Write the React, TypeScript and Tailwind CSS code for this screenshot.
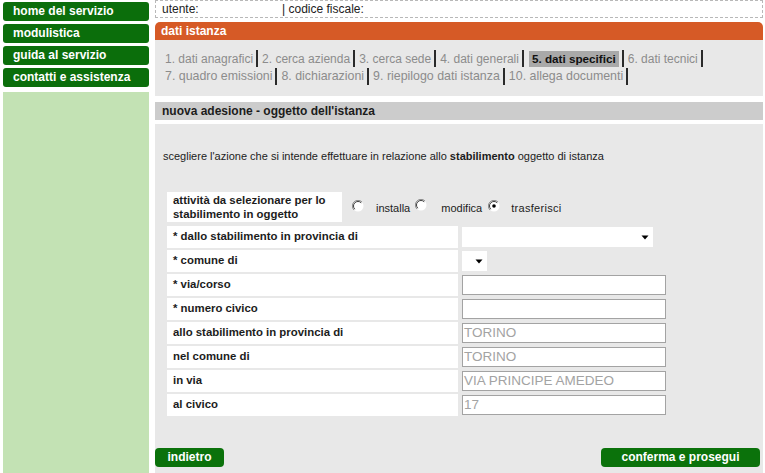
import React from "react";

const font = "font-['Liberation_Sans',Arial,sans-serif]";

function Radio({ checked }: { checked?: boolean }) {
  return (
    <svg width="12" height="12" viewBox="0 0 12 12" className="shrink-0">
      <circle cx="6" cy="6" r="5.5" fill="#ffffff" />
      <path d="M10 2 A5.6 5.6 0 0 0 2 10" stroke="#8a8a8a" strokeWidth="1" fill="none" />
      <path d="M9.2 2.8 A4.5 4.5 0 0 0 2.8 9.2" stroke="#3c3c3c" strokeWidth="1" fill="none" />
      {checked && <circle cx="6" cy="6" r="1.8" fill="#000" />}
    </svg>
  );
}

function Step({ label, active }: { label: string; active?: boolean }) {
  return (
    <span className="flex items-center h-[17px] border-r-2 border-[#2a2a2a] pr-[3px] mr-[4px]">
      {active ? (
        <span className="bg-[#a9a9a9] text-[#111] font-bold text-[11.7px] px-[3px] h-[16px] leading-[16px] ml-[1px]">{label}</span>
      ) : (
        <span className="text-[#8c8c8c]">{label}</span>
      )}
    </span>
  );
}

function Caret() {
  return (
    <svg width="8" height="5" viewBox="0 0 8 5">
      <path d="M0.5 0.5 L7.5 0.5 L4 4.5 Z" fill="#000" />
    </svg>
  );
}

function Row({ label, children }: { label: string; children?: React.ReactNode }) {
  return (
    <div className="flex items-center h-[22px]">
      <div className="w-[291px] h-[22px] bg-white pl-[6px] flex items-center font-bold text-[11.4px] text-[#1c1c1c]">
        {label}
      </div>
      <div className="ml-[4px] flex items-center">{children}</div>
    </div>
  );
}

function TextInput({ value }: { value?: string }) {
  return (
    <div className="w-[204px] h-[20px] bg-white border border-[#a3a3a3] flex items-center pl-[1px] text-[13.5px] text-[#a3a3a3] leading-none">
      {value ?? ""}
    </div>
  );
}

export default function App() {
  return (
    <div className={`w-[765px] h-[473px] bg-white flex overflow-hidden ${font}`}>
      {/* Sidebar */}
      <div className="w-[146px] ml-[3px] flex flex-col pt-[2px]">
        <div className="flex flex-col gap-[3px]">
          {["home del servizio", "modulistica", "guida al servizio", "contatti e assistenza"].map((t) => (
            <div
              key={t}
              className="h-[19px] rounded-[3px] bg-[#0b6e0b] text-white font-bold text-[12px] leading-[19px] pl-[10px]"
            >
              {t}
            </div>
          ))}
        </div>
        <div className="mt-[5px] flex-1 bg-[#c3e2b4]" />
      </div>

      {/* Main */}
      <div className="ml-[6px] w-[608px] flex flex-col">
        <div className="h-[18px] border border-dashed border-[#b8b8b8] flex items-center pl-[6px] text-[12px] text-[#222]">
          <span className="w-[120px]">utente:</span>
          <span>| codice fiscale:</span>
        </div>

        <div className="mt-[4px] h-[18px] rounded-t-[5px] bg-[#d65a26] text-white font-bold text-[12px] leading-[18px] pl-[6px]">
          dati istanza
        </div>

        <div className="h-[56px] bg-[#e8e8e8] pt-[10px] pl-[10px] text-[12px] flex flex-col gap-[1px]">
          <div className="flex">
            <Step label="1. dati anagrafici" />
            <Step label="2. cerca azienda" />
            <Step label="3. cerca sede" />
            <Step label="4. dati generali" />
            <Step label="5. dati specifici" active />
            <Step label="6. dati tecnici" />
          </div>
          <div className="flex text-[12.4px]">
            <Step label="7. quadro emissioni" />
            <Step label="8. dichiarazioni" />
            <Step label="9. riepilogo dati istanza" />
            <Step label="10. allega documenti" />
          </div>
        </div>

        <div className="mt-[6px] h-[18px] bg-[#cccccc] font-bold text-[12px] leading-[18px] pl-[7px] text-[#1c1c1c]">
          nuova adesione - oggetto dell'istanza
        </div>

        <div className="mt-[4px] flex-1 bg-[#e8e8e8] flex flex-col">
          <div className="pt-[25px] pl-[8px] text-[11px] leading-[14px] text-[#1c1c1c]">
            scegliere l'azione che si intende effettuare in relazione allo <b>stabilimento</b> oggetto di istanza
          </div>

          <div className="mt-[28px] ml-[12px] flex flex-col gap-[2px]">
            <div className="flex items-center h-[31px] mb-[2px]">
              <div className="w-[175px] h-[30px] bg-white pl-[6px] flex flex-col justify-center font-bold text-[11.4px] leading-[14px] text-[#1c1c1c]">
                <span>attività da selezionare per lo</span>
                <span>stabilimento in oggetto</span>
              </div>
              <div className="flex items-center text-[11px] text-[#1c1c1c] ml-[10px] mt-[4px]">
                <span className="mt-[-5px]"><Radio /></span>
                <span className="ml-[12px] mr-[5px]">installa</span>
                <span className="mt-[-7px]"><Radio /></span>
                <span className="ml-[14px] mr-[6px]">modifica</span>
                <span className="mt-[-6px]"><Radio checked /></span>
                <span className="ml-[11px] tracking-[0.3px]">trasferisci</span>
              </div>
            </div>

            <Row label="* dallo stabilimento in provincia di">
              <div className="w-[191px] h-[20px] bg-white flex items-center justify-end pr-[4px]">
                <Caret />
              </div>
            </Row>
            <Row label="* comune di">
              <div className="w-[25px] h-[20px] bg-white flex items-center justify-end pr-[4px]">
                <Caret />
              </div>
            </Row>
            <Row label="* via/corso">
              <TextInput />
            </Row>
            <Row label="* numero civico">
              <TextInput />
            </Row>
            <Row label="allo stabilimento in provincia di">
              <TextInput value="TORINO" />
            </Row>
            <Row label="nel comune di">
              <TextInput value="TORINO" />
            </Row>
            <Row label="in via">
              <TextInput value="VIA PRINCIPE AMEDEO" />
            </Row>
            <Row label="al civico">
              <TextInput value="17" />
            </Row>
          </div>

          <div className="flex-1" />

          <div className="flex justify-between items-center pb-[6px] pr-[3px]">
            <div className="w-[69px] h-[19px] rounded-[4px] bg-[#0b720b] text-white font-bold text-[12px] leading-[19px] text-center">
              indietro
            </div>
            <div className="w-[159px] h-[19px] rounded-[4px] bg-[#0b720b] text-white font-bold text-[12px] leading-[19px] text-center">
              conferma e prosegui
            </div>
          </div>
        </div>
      </div>
    </div>
  );
}
